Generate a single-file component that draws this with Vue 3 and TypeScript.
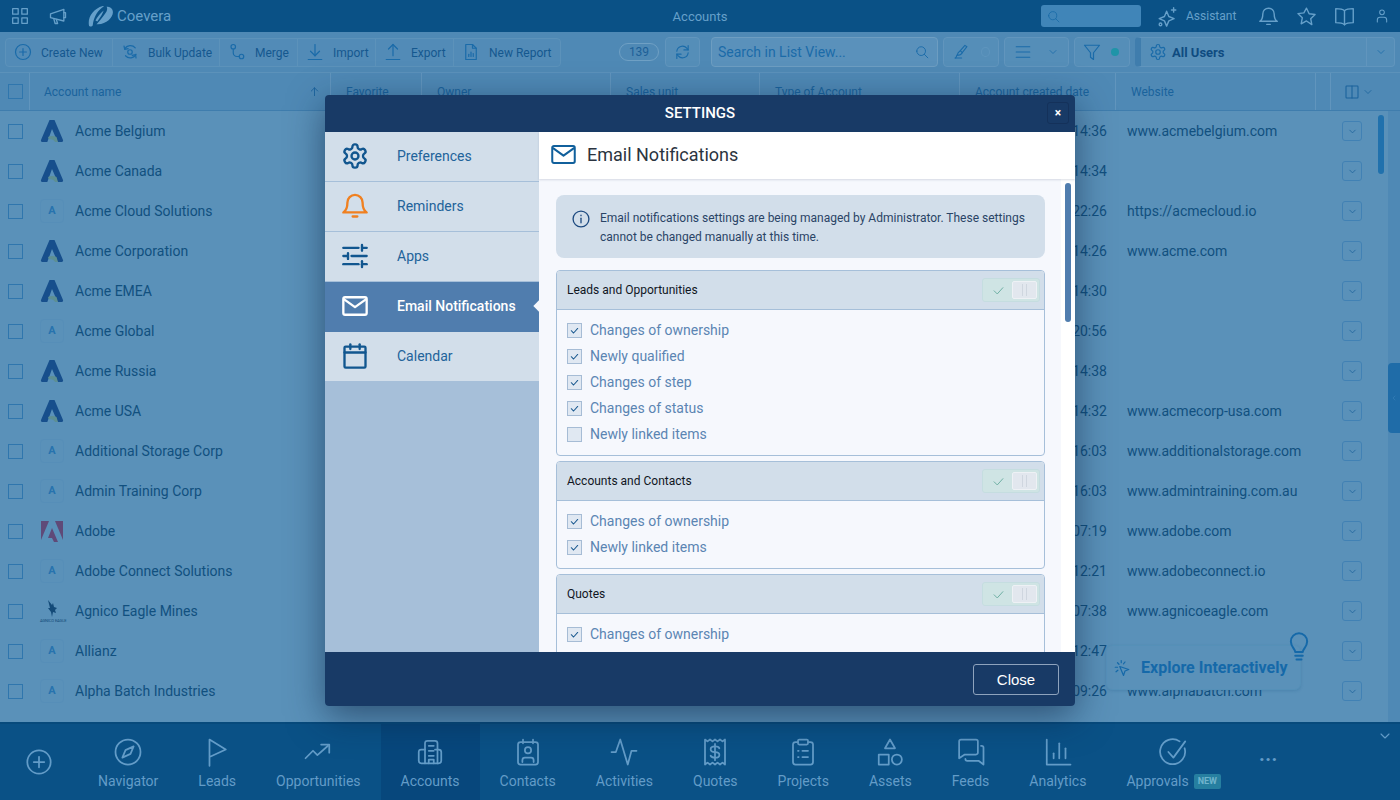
<script setup lang="ts">
import { h } from 'vue';

const circle = (cx: number, cy: number, r: number) =>
  `M${cx - r} ${cy}a${r} ${r} 0 1 0 ${r * 2} 0a${r} ${r} 0 1 0 ${-r * 2} 0z`;

const icons: Record<string, string[]> = {
  grid: ['M4 4h6v6H4z', 'M14 4h6v6h-6z', 'M4 14h6v6H4z', 'M14 14h6v6h-6z'],
  megaphone: ['M3 9.5L19 4v14L3 14z', 'M7 15.5l1.5 5.5h3l-1.5-4.8', 'M19 8h2v6h-2'],
  plusCircle: [circle(12, 12, 10), 'M12 7.5v9', 'M7.5 12h9'],
  bulk: ['M5 8a8.5 8.5 0 0 1 14-1.5', 'M4 4l1 4.5 4.5-1', 'M20 15a8.5 8.5 0 0 1-14 2', 'M20 20l-.5-4.5-4.5 1', circle(12, 12, 3)],
  merge: [circle(7, 5, 3), 'M7 8v5a5 5 0 0 0 5 5h3', circle(18, 18, 3)],
  download: ['M12 2v15', 'M6 11l6 6 6-6', 'M3 22h18'],
  upload: ['M12 17V2', 'M6 8l6-6 6 6', 'M3 22h18'],
  report: ['M5 2h9l5 5v15H5z', 'M14 2v5h5', 'M9 18v-3', 'M12 18v-6', 'M15 18v-4'],
  refresh: ['M4 11a8 8 0 0 1 14-4.5L20 9', 'M20 3v6h-6', 'M20 13a8 8 0 0 1-14 4.5L4 15', 'M4 21v-6h6'],
  search: [circle(10.5, 10.5, 7.5), 'M16 16l6 6'],
  brush: ['M3 21h10', 'M6 17l-2 4', 'M6 17c1-4 3-6 5-7l3 3c-1 2-4 4-8 4z', 'M11 10l7-8 3 2-7 9'],
  menu: ['M3 5h18', 'M3 12h18', 'M3 19h18'],
  filter: ['M2 3h20l-8 10v9l-4-3v-6z'],
  gear: [
    'M12.22 2h-.44a2 2 0 0 0-2 2v.18a2 2 0 0 1-1 1.73l-.43.25a2 2 0 0 1-2 0l-.15-.08a2 2 0 0 0-2.73.73l-.22.38a2 2 0 0 0 .73 2.73l.15.1a2 2 0 0 1 1 1.72v.51a2 2 0 0 1-1 1.74l-.15.09a2 2 0 0 0-.73 2.73l.22.38a2 2 0 0 0 2.73.73l.15-.08a2 2 0 0 1 2 0l.43.25a2 2 0 0 1 1 1.73V20a2 2 0 0 0 2 2h.44a2 2 0 0 0 2-2v-.18a2 2 0 0 1 1-1.73l.43-.25a2 2 0 0 1 2 0l.15.08a2 2 0 0 0 2.73-.73l.22-.39a2 2 0 0 0-.73-2.73l-.15-.08a2 2 0 0 1-1-1.74v-.5a2 2 0 0 1 1-1.74l.15-.09a2 2 0 0 0 .73-2.73l-.22-.38a2 2 0 0 0-2.73-.73l-.15.08a2 2 0 0 1-2 0l-.43-.25a2 2 0 0 1-1-1.73V4a2 2 0 0 0-2-2z',
    circle(12, 12, 3),
  ],
  bell: ['M5.5 9a6.5 6.5 0 0 1 13 0c0 5 1 7 3.5 8.5H2C4.5 16 5.5 14 5.5 9z', 'M10 21h4'],
  sliders: ['M2 5h13', 'M18 5h4', 'M18 2.5v5', 'M2 12h4', 'M9 12h13', 'M6 9.5v5', 'M2 19h13', 'M18 19h4', 'M18 16.5v5'],
  mail: ['M3.5 4.5h17A1.5 1.5 0 0 1 22 6v12a1.5 1.5 0 0 1-1.5 1.5h-17A1.5 1.5 0 0 1 2 18V6a1.5 1.5 0 0 1 1.5-1.5z', 'M3 6.5l9 6.5 9-6.5'],
  calendar: ['M4 4h16a1 1 0 0 1 1 1v16a1 1 0 0 1-1 1H4a1 1 0 0 1-1-1V5a1 1 0 0 1 1-1z', 'M3 9h18', 'M8 2v4', 'M16 2v4'],
  info: [circle(12, 12, 9.5), 'M12 11v5.5', 'M12 7.5v.5'],
  check: ['M5 12.5l5 5 9-10'],
  chevron: ['M6 9l6 6 6-6'],
  chevronLeft: ['M15 6l-6 6 6 6'],
  arrowUp: ['M12 21V4', 'M5 11l7-7 7 7'],
  columns: ['M4 3h16a1 1 0 0 1 1 1v16a1 1 0 0 1-1 1H4a1 1 0 0 1-1-1V4a1 1 0 0 1 1-1z', 'M12 3v18'],
  sparkle: ['M11 6l2.5 6 6 2.5-6 2.5L11 23l-2.5-6-6-2.5 6-2.5z', 'M19 2v5', 'M16.5 4.5h5', circle(4, 21, 1.5)],
  star: ['M12 2.5l3 6.3 6.8.9-5 4.8 1.3 6.8L12 17.1l-6.100 3.200 1.300-6.800-5-4.800 6.800-.9z'],
  book: ['M12 5.5C10 3.5 6 3 2 3v16c4 0 8 .5 10 2.5 2-2 6-2.5 10-2.5V3c-4 0-8 .5-10 2.5z', 'M12 5.5v16'],
  user: [circle(12, 6.5, 3.5), 'M5 21v-3a4 4 0 0 1 4-4h6a4 4 0 0 1 4 4v3'],
  compass: [circle(12, 12, 10), 'M16.5 7.5l-2.500 6-6.500 3 2.500-6z'],
  flag: ['M6 23V2l13 8-13 6'],
  trend: ['M2 17l6-6 3.5 3.5L20 7', 'M14.5 6H21v6.5'],
  building: ['M8 21V5a2 2 0 0 1 2-2h6a2 2 0 0 1 2 2v16', 'M8 10H5a2 2 0 0 0-2 2v7a2 2 0 0 0 2 2h14a2 2 0 0 0 2-2v-7a2 2 0 0 0-2-2h-3', 'M11 7h4', 'M11 11h4', 'M11 15h4', 'M11 21v-3h4v3'],
  contacts: ['M6 4h12a2 2 0 0 1 2 2v14a2 2 0 0 1-2 2H6a2 2 0 0 1-2-2V6a2 2 0 0 1 2-2z', 'M8 2v3', 'M16 2v3', circle(12, 10.5, 2.5), 'M7.5 20v-1.5a2 2 0 0 1 2-2h5a2 2 0 0 1 2 2V20'],
  activity: ['M2 12h3.5L9 2l6 20 3-11h4'],
  quotes: ['M4 2l2 1.5L8 2l2 1.5L12 2l2 1.5L16 2l2 1.5L20 2v20l-2-1.5-2 1.5-2-1.5-2 1.5-2-1.5L8 22l-2-1.5L4 22z', 'M15.5 9c-.5-1-1.5-1.5-3.5-1.5-2.5 0-3.5 1-3.5 2.3S9.5 12 12 12s3.5 1 3.5 2.3-1 2.2-3.5 2.2c-2 0-3-.5-3.5-1.5', 'M12 5.5v13'],
  projects: ['M8 4H6a2 2 0 0 0-2 2v14a2 2 0 0 0 2 2h12a2 2 0 0 0 2-2V6a2 2 0 0 0-2-2h-2', 'M9 2h6a1 1 0 0 1 1 1v2a1 1 0 0 1-1 1H9a1 1 0 0 1-1-1V3a1 1 0 0 1 1-1z', 'M8 11h.5', 'M11.5 11H16', 'M8 16h.5', 'M11.5 16H16'],
  assets: ['M12 2l4 7H8z', 'M3 14h8v8H3z', circle(17.5, 18, 4)],
  feeds: ['M4 2h12a1.5 1.5 0 0 1 1.5 1.5v9A1.5 1.5 0 0 1 16 14H7l-4.5 3V3.5A1.5 1.5 0 0 1 4 2z', 'M20 7h.5A1.5 1.5 0 0 1 22 8.5V22l-4-3H9a1.5 1.5 0 0 1-1.5-1.5'],
  analytics: ['M3 2v20h19', 'M8.5 17v-4', 'M13 17V5', 'M18 17V9'],
  approvals: ['M20.5 9a10 10 0 1 1-4-5.5', 'M7.5 12l4 4.5L21 3.5'],
  cursor: ['M9 10l12 4-5 2-2 6z', 'M6 5l2 2', 'M3 11h3', 'M11 2v3', 'M4 17l2.5-2', 'M16 4l-2 2.5'],
  bulb: ['M9 16c0-2.5-3.5-4-3.5-8.5a6.5 6.5 0 0 1 13 0c0 4.500-3.500 6-3.500 8.500z', 'M9 19h6', 'M10 22h4'],
};

const Icon = (props: { name: string }) =>
  h(
    'svg',
    { viewBox: '0 0 24 24', fill: 'none', stroke: 'currentColor', 'stroke-linecap': 'round', 'stroke-linejoin': 'round' },
    icons[props.name].map((d) => h('path', { d })),
  );
Icon.props = ['name'];

const actions = [
  { label: 'Create New', icon: 'plusCircle' },
  { label: 'Bulk Update', icon: 'bulk' },
  { label: 'Merge', icon: 'merge' },
  { label: 'Import', icon: 'download' },
  { label: 'Export', icon: 'upload' },
  { label: 'New Report', icon: 'report' },
];

const columns = ['Favorite', 'Owner', 'Sales unit', 'Type of Account', 'Account created date', 'Website'];

const accounts = [
  { name: 'Acme Belgium', logo: 'acme', time: '14:36', web: 'www.acmebelgium.com' },
  { name: 'Acme Canada', logo: 'acme', time: '14:34', web: '' },
  { name: 'Acme Cloud Solutions', logo: 'text', time: '22:26', web: 'https://acmecloud.io' },
  { name: 'Acme Corporation', logo: 'acme', time: '14:26', web: 'www.acme.com' },
  { name: 'Acme EMEA', logo: 'acme', time: '14:30', web: '' },
  { name: 'Acme Global', logo: 'text', time: '20:56', web: '' },
  { name: 'Acme Russia', logo: 'acme', time: '14:38', web: '' },
  { name: 'Acme USA', logo: 'acme', time: '14:32', web: 'www.acmecorp-usa.com' },
  { name: 'Additional Storage Corp', logo: 'text', time: '16:03', web: 'www.additionalstorage.com' },
  { name: 'Admin Training Corp', logo: 'text', time: '16:03', web: 'www.admintraining.com.au' },
  { name: 'Adobe', logo: 'adobe', time: '07:19', web: 'www.adobe.com' },
  { name: 'Adobe Connect Solutions', logo: 'text', time: '12:21', web: 'www.adobeconnect.io' },
  { name: 'Agnico Eagle Mines', logo: 'agnico', time: '07:38', web: 'www.agnicoeagle.com' },
  { name: 'Allianz', logo: 'text', time: '12:47', web: 'www.allianz.com' },
  { name: 'Alpha Batch Industries', logo: 'text', time: '09:26', web: 'www.alphabatch.com' },
];

const navItems = [
  { label: 'Navigator', icon: 'compass' },
  { label: 'Leads', icon: 'flag' },
  { label: 'Opportunities', icon: 'trend' },
  { label: 'Accounts', icon: 'building', active: true },
  { label: 'Contacts', icon: 'contacts' },
  { label: 'Activities', icon: 'activity' },
  { label: 'Quotes', icon: 'quotes' },
  { label: 'Projects', icon: 'projects' },
  { label: 'Assets', icon: 'assets' },
  { label: 'Feeds', icon: 'feeds' },
  { label: 'Analytics', icon: 'analytics' },
  { label: 'Approvals', icon: 'approvals', badge: 'NEW' },
];

const menu = [
  { label: 'Preferences', icon: 'gear' },
  { label: 'Reminders', icon: 'bell', orange: true },
  { label: 'Apps', icon: 'sliders' },
  { label: 'Email Notifications', icon: 'mail', active: true },
  { label: 'Calendar', icon: 'calendar' },
];

const sections = [
  {
    title: 'Leads and Opportunities',
    items: [
      { label: 'Changes of ownership', on: true },
      { label: 'Newly qualified', on: true },
      { label: 'Changes of step', on: true },
      { label: 'Changes of status', on: true },
      { label: 'Newly linked items', on: false },
    ],
  },
  {
    title: 'Accounts and Contacts',
    items: [
      { label: 'Changes of ownership', on: true },
      { label: 'Newly linked items', on: true },
    ],
  },
  {
    title: 'Quotes',
    items: [{ label: 'Changes of ownership', on: true }],
  },
];
</script>

<template>
  <div class="app">
    <header class="topbar">
      <Icon name="grid" class="top-ic first" />
      <Icon name="megaphone" class="top-ic mega" />
      <svg class="brand" viewBox="0 0 28 24">
        <path d="M1 23C-1 14 5 4 16 1c2 0 .5 1-1 2C9 8 6 14 5 22c0 1-3 2-4 1z" />
        <path d="M9 21c3-3 8-9 11-14 1-2 1-4 0-5 4 0 7 2 7 6 0 6-8 14-18 13z" />
        <path d="M8 17c2-4 5-8 9-11-1 3-4 8-7 12z" />
      </svg>
      <span class="brand-name">Coevera</span>
      <span class="top-title">Accounts</span>
      <div class="top-search"><Icon name="search" /></div>
      <Icon name="sparkle" class="top-ic spark" />
      <span class="assistant">Assistant</span>
      <Icon name="bell" class="top-ic right bell" />
      <Icon name="star" class="top-ic right" />
      <Icon name="book" class="top-ic right" />
      <Icon name="user" class="top-ic last" />
    </header>

    <div class="toolbar">
      <div class="actions">
        <button v-for="a in actions" :key="a.label" class="action">
          <Icon :name="a.icon" />
          <span>{{ a.label }}</span>
        </button>
      </div>
      <span class="count">139</span>
      <button class="tool refresh"><Icon name="refresh" /></button>
      <div class="list-search">
        <span>Search in List View...</span>
        <Icon name="search" />
      </div>
      <button class="tool brush"><Icon name="brush" /><i class="dot off"></i></button>
      <button class="tool lines"><Icon name="menu" /><Icon name="chevron" class="tiny" /></button>
      <button class="tool funnel"><Icon name="filter" /><i class="dot"></i></button>
      <div class="users">
        <Icon name="gear" />
        <b>All Users</b>
        <span class="users-caret"><Icon name="chevron" /></span>
      </div>
    </div>

    <div class="grid-head cols">
      <div class="head-check"><i class="box"></i></div>
      <div class="head-name">Account name<Icon name="arrowUp" class="sort" /></div>
      <div v-for="c in columns" :key="c" class="head-cell">{{ c }}</div>
      <div class="head-spacer"></div>
      <div class="head-cols"><Icon name="columns" /><Icon name="chevron" /></div>
    </div>

    <main class="list">
      <div v-for="a in accounts" :key="a.name" class="row cols">
        <div class="cell-check"><i class="box"></i></div>
        <div class="cell-name">
          <svg v-if="a.logo === 'acme'" class="logo" viewBox="0 0 24 24">
            <path class="acme-a" d="M9.500 1h5l8.500 20c.4 1-.3 2-1.300 2h-4L12 10 7.300 23h-5c-1 0-1.700-1-1.300-2z" />
            <path class="acme-b" d="M8 18c3-1.500 6-1.200 8.500 0l1.500 5h-3c-1-2-3-3-6-2.500z" />
          </svg>
          <svg v-else-if="a.logo === 'adobe'" class="logo" viewBox="0 0 24 24">
            <path class="adobe" d="M1 2h8L1 21z" />
            <path class="adobe" d="M15 2h8v19z" />
            <path class="adobe" d="M12 9l6 14h-4l-2-4h-4z" />
          </svg>
          <div v-else-if="a.logo === 'agnico'" class="agnico">
            <svg viewBox="0 0 14 18"><path d="M3 0l4 5 1-2 1 4 3 1-2 2 1 3-3-1-1 5-1-5-3-4 2 0z" /></svg>
            <small>AGNICO EAGLE</small>
          </div>
          <span v-else class="letter">A</span>
          <span class="name">{{ a.name }}</span>
        </div>
        <div class="cell-time">{{ a.time }}</div>
        <div class="cell-web">{{ a.web }}</div>
        <div class="cell-more"><button class="more"><Icon name="chevron" /></button></div>
      </div>
      <div class="row cols">
        <div class="cell-check"><i class="box"></i></div>
      </div>
    </main>

    <nav class="bottom">
      <Icon name="plusCircle" class="nav-plus" />
      <a v-for="n in navItems" :key="n.label" class="nav-item" :class="{ active: n.active }">
        <Icon :name="n.icon" />
        <span class="nav-label">{{ n.label }}<em v-if="n.badge">{{ n.badge }}</em></span>
      </a>
      <span class="nav-dots">...</span>
      <Icon name="chevron" class="nav-collapse" />
    </nav>

    <div class="side-tab"><Icon name="chevronLeft" /></div>
    <div class="list-thumb"></div>

    <div class="explore">
      <Icon name="cursor" />
      <span>Explore Interactively</span>
      <Icon name="bulb" class="explore-bulb" />
    </div>

    <section class="modal">
      <header class="modal-head">
        <h2>SETTINGS</h2>
        <button class="modal-x">×</button>
      </header>
      <div class="modal-body">
        <aside class="menu">
          <a v-for="m in menu" :key="m.label" class="menu-item" :class="{ active: m.active, orange: m.orange }">
            <Icon :name="m.icon" />
            <span>{{ m.label }}</span>
          </a>
        </aside>
        <div class="pane">
          <div class="pane-title">
            <Icon name="mail" />
            <h3>Email Notifications</h3>
          </div>
          <div class="pane-main">
            <div class="pane-scroll">
              <div class="notice">
                <Icon name="info" />
                <p>Email notifications settings are being managed by Administrator. These settings cannot be changed manually at this time.</p>
              </div>
              <div v-for="s in sections" :key="s.title" class="section">
                <div class="section-head">
                  <span>{{ s.title }}</span>
                  <div class="switch">
                    <span class="switch-on"><Icon name="check" /></span>
                    <span class="switch-knob"><i></i></span>
                  </div>
                </div>
                <div class="section-items">
                  <label v-for="it in s.items" :key="it.label" class="opt">
                    <span class="opt-box"><Icon v-if="it.on" name="check" /></span>
                    {{ it.label }}
                  </label>
                </div>
              </div>
            </div>
            <div class="pane-track"><div class="pane-thumb"></div></div>
          </div>
        </div>
      </div>
      <footer class="modal-foot">
        <button class="close">Close</button>
      </footer>
    </section>
  </div>
</template>

<style scoped>
.app {
  position: relative;
  display: flex;
  flex-direction: column;
  width: 1400px;
  height: 800px;
  overflow: hidden;
  font-family: Roboto, 'Liberation Sans', sans-serif;
  background: #5a91b9;
  color: #13538a;
}

svg {
  display: block;
  fill: none;
  stroke-width: 1.6;
}

button {
  font-family: inherit;
  cursor: pointer;
}

/* top bar */
.topbar {
  display: flex;
  align-items: center;
  flex: none;
  height: 32px;
  background: #0a5186;
  color: #66a0ca;
  position: relative;
}

.top-ic {
  width: 20px;
  height: 20px;
  flex: none;
}

.first {
  width: 22px;
  height: 22px;
  margin-left: 9px;
  stroke-width: 1.4;
}

.mega {
  margin-left: 17px;
}

.brand {
  width: 26px;
  height: 22px;
  margin-left: 20px;
  fill: #66a0ca;
  stroke: none;
}

.brand-name {
  margin-left: 3px;
  font-size: 15px;
}

.top-title {
  position: absolute;
  left: 0;
  right: 0;
  text-align: center;
  font-size: 13px;
  pointer-events: none;
}

.top-search {
  margin-left: auto;
  width: 100px;
  height: 22px;
  margin-top: -1px;
  background: #4085b8;
  border-radius: 3px;
  padding: 5px 6px;
  box-sizing: border-box;
  color: #1a6ca8;
}

.top-search svg {
  width: 13px;
  height: 13px;
}

.spark {
  width: 21px;
  height: 21px;
  margin-left: 16px;
}

.assistant {
  margin-left: 8px;
  width: 50px;
  font-size: 12px;
}

.right {
  width: 21px;
  height: 21px;
  margin-left: 17px;
}

.bell {
  margin-left: 22px;
}

.last {
  width: 16px;
  height: 18px;
  margin: 0 10px 0 19px;
}

/* toolbar */
.toolbar {
  display: flex;
  align-items: center;
  flex: none;
  height: 41px;
  padding: 0 5px;
  box-sizing: border-box;
  background: #4f89b5;
  border-bottom: 1px solid #5c92ba;
}

.actions {
  display: grid;
  grid-template-columns: 107px 107px 78px 78px 78px 106px;
  height: 29px;
  width: 556px;
  border: 1px solid #5c92ba;
  border-radius: 4px;
  box-sizing: border-box;
  background: #528bb7;
}

.action {
  display: flex;
  align-items: center;
  gap: 9px;
  padding: 0 0 0 8px;
  border: none;
  border-right: 1px solid #5c92ba;
  background: none;
  color: #15588f;
  font-size: 12px;
  white-space: nowrap;
}

.action:last-child {
  border-right: none;
}

.action span {
  margin-top: 2px;
}

.action svg {
  width: 18px;
  height: 18px;
  color: #1a6ba9;
  flex: none;
}

.count {
  width: 38px;
  height: 16px;
  margin-left: 58px;
  border: 1px solid #6fa0c4;
  border-radius: 9px;
  font-size: 12px;
  line-height: 16px;
  text-align: center;
  color: #1d6098;
}

.tool {
  display: flex;
  align-items: center;
  height: 30px;
  padding: 0 8px;
  box-sizing: border-box;
  border: 1px solid #6195bd;
  border-radius: 4px;
  background: #558eb8;
  color: #1a6ba9;
}

.tool svg {
  width: 18px;
  height: 18px;
}

.refresh {
  width: 35px;
  margin-left: 6px;
}

.list-search {
  display: flex;
  align-items: center;
  justify-content: space-between;
  width: 227px;
  height: 30px;
  margin-left: 11px;
  padding: 0 8px 0 6px;
  box-sizing: border-box;
  border: 1px solid #6d9dc1;
  border-radius: 4px;
  background: #5a91bb;
  color: #1a6ba9;
  font-size: 14px;
}

.list-search svg {
  width: 14px;
  height: 14px;
}

.brush {
  width: 56px;
  margin-left: 5px;
  gap: 12px;
  padding-left: 9px;
}

.lines {
  width: 65px;
  margin-left: 5px;
  gap: 15px;
  padding-left: 9px;
}

.lines .tiny {
  width: 12px;
  height: 12px;
}

.funnel {
  width: 56px;
  margin-left: 5px;
  gap: 10px;
  padding-left: 8px;
}

.dot {
  width: 8px;
  height: 8px;
  border-radius: 50%;
  background: #1f94a8;
}

.dot.off {
  background: #558eb8;
  border: 1px solid #5f95be;
}

.users {
  display: flex;
  align-items: center;
  width: 260px;
  height: 30px;
  margin-left: 5px;
  padding-left: 13px;
  box-sizing: border-box;
  border: 1px solid #6195bd;
  border-left: 6px solid #3f7dad;
  border-radius: 4px;
  background: #558eb8;
  color: #0f4b80;
  font-size: 13px;
}

.users svg {
  width: 18px;
  height: 18px;
  margin-right: 5px;
  margin-left: -5px;
  color: #1a6ba9;
}

.users b {
  font-weight: 700;
}

.users-caret {
  display: flex;
  align-items: center;
  justify-content: center;
  align-self: stretch;
  width: 27px;
  margin-left: auto;
  border-left: 1px solid #6195bd;
}

.users-caret svg {
  width: 12px;
  height: 12px;
  margin: 0;
}

/* list */
.cols {
  display: grid;
  grid-template-columns: 30px 301px 91px 189px 149px 200px 156px 200px 15px 47px 22px;
}

.grid-head {
  flex: none;
  height: 38px;
  align-items: stretch;
  background: #4f89b5;
  border-bottom: 1px solid #3f7dad;
  box-sizing: border-box;
  font-size: 12px;
  color: #1a639c;
}

.grid-head > div {
  display: flex;
  align-items: center;
  border-right: 1px solid #6195bd;
}

.head-check {
  padding-left: 8px;
}

.head-name {
  position: relative;
  padding-left: 14px;
}

.sort {
  position: absolute;
  right: 10px;
  width: 11px;
  height: 11px;
  stroke-width: 2;
}

.head-cell {
  padding-left: 15px;
}

.head-cols {
  gap: 2px;
  padding-left: 13px;
  grid-column: 10 / 12;
  border-right: none !important;
}

.head-cols svg {
  width: 16px;
  height: 16px;
}

.head-cols svg:last-child {
  width: 12px;
  height: 12px;
}

.box {
  display: block;
  width: 15px;
  height: 15px;
  box-sizing: border-box;
  border: 1px solid #2f76ad;
  background: transparent;
}

.list {
  flex: 1;
  min-height: 0;
  overflow: hidden;
  background: #5a91b9;
}

.row {
  height: 40px;
  align-items: center;
  font-size: 14px;
  color: #11507f;
}

.cell-check {
  padding-left: 8px;
}

.cell-name {
  display: flex;
  align-items: center;
  grid-column: 2 / 7;
  padding-left: 10px;
}

.name {
  margin-left: 11px;
}

.logo {
  width: 24px;
  height: 24px;
  flex: none;
  stroke: none;
}

.acme-a {
  fill: #174f8c;
}

.acme-b {
  fill: #5d8f93;
}

.adobe {
  fill: #5f4a78;
}

.letter {
  display: block;
  flex: none;
  width: 24px;
  height: 24px;
  box-sizing: border-box;
  border: 1px solid #568eb8;
  border-radius: 4px;
  font-size: 11px;
  font-weight: 700;
  line-height: 22px;
  text-align: center;
  color: #2773ae;
}

.agnico {
  flex: none;
  width: 24px;
  text-align: center;
  line-height: 1;
  color: #134a78;
}

.agnico svg {
  width: 14px;
  height: 18px;
  margin: 0 auto 1px;
  fill: #134a78;
  stroke: none;
}

.agnico small {
  display: block;
  font-size: 4px;
  letter-spacing: -0.1px;
  white-space: nowrap;
}

.cell-time {
  grid-column: 7;
  padding-right: 9px;
  text-align: right;
}

.cell-web {
  grid-column: 8 / 10;
  padding-left: 11px;
  white-space: nowrap;
}

.cell-more {
  grid-column: 10;
  padding-left: 11px;
}

.more {
  display: flex;
  align-items: center;
  justify-content: center;
  width: 20px;
  height: 20px;
  padding: 0;
  background: transparent;
  border: 1px solid #4181b4;
  border-radius: 3px;
  color: #175f99;
}

.more svg {
  width: 11px;
  height: 11px;
}

.list-thumb {
  position: absolute;
  left: 1378px;
  top: 115px;
  width: 6px;
  height: 59px;
  border-radius: 3px;
  background: #2071ad;
}

.side-tab {
  position: absolute;
  right: 0;
  top: 111px;
  width: 12px;
  height: 611px;
  background: #4f89b5;
}

.side-tab svg {
  position: absolute;
  top: 252px;
  left: 0;
  width: 12px;
  height: 70px;
  background: #1f6ca8;
  border-radius: 4px 0 0 4px;
  color: #3f85bb;
  padding: 29px 2px;
  box-sizing: border-box;
}

/* bottom nav */
.bottom {
  display: flex;
  align-items: stretch;
  flex: none;
  position: relative;
  height: 78px;
  background: #0a5186;
  border-top: 2px solid #074a7c;
  box-sizing: border-box;
  color: #639cc8;
}

.nav-plus {
  flex: none;
  align-self: center;
  width: 28px;
  height: 28px;
  margin: 0 25px;
  stroke-width: 1.5;
}

.nav-item {
  display: flex;
  flex-direction: column;
  align-items: center;
  padding: 0 20px;
  flex: none;
}

.nav-item svg {
  width: 30px;
  height: 30px;
  margin-top: 13px;
  stroke-width: 1.4;
}

.nav-item.active {
  background: #07477c;
}

.nav-label {
  display: flex;
  align-items: center;
  height: 18px;
  margin-top: 5px;
  font-size: 14px;
}

.nav-label em {
  margin-left: 5px;
  padding: 0 4px;
  height: 15px;
  border-radius: 2px;
  background: #267fa0;
  color: #6fb3cc;
  font-size: 9px;
  font-style: normal;
  font-weight: 700;
  line-height: 15px;
}

.nav-dots {
  margin-left: 18px;
  margin-top: 18px;
  font-size: 20px;
  font-weight: 700;
  letter-spacing: 0.5px;
}

.nav-collapse {
  position: absolute;
  right: 7px;
  top: 4px;
  width: 16px;
  height: 16px;
}

/* explore */
.explore {
  position: absolute;
  left: 1106px;
  top: 645px;
  display: flex;
  align-items: center;
  gap: 10px;
  width: 195px;
  height: 45px;
  padding-left: 6px;
  box-sizing: border-box;
  background: #5a91b9;
  border: 1px solid #5590b8;
  border-radius: 6px;
  box-shadow: 0 1px 3px rgba(20, 80, 130, 0.2);
  color: #1569a9;
  font-size: 16px;
  font-weight: 700;
}

.explore > svg {
  width: 18px;
  height: 18px;
  flex: none;
}

.explore .explore-bulb {
  position: absolute;
  right: -14px;
  top: -14px;
  width: 30px;
  height: 30px;
}

/* modal */
.modal {
  position: absolute;
  left: 325px;
  top: 95px;
  display: flex;
  flex-direction: column;
  width: 750px;
  height: 611px;
  border-radius: 4px;
  overflow: hidden;
  box-shadow: 0 10px 36px rgba(8, 30, 60, 0.55);
}

.modal-head {
  position: relative;
  flex: none;
  height: 37px;
  background: #183a66;
}

.modal-head h2 {
  margin: 0;
  font-size: 15px;
  font-weight: 500;
  line-height: 36px;
  text-align: center;
  color: #fff;
}

.modal-x {
  position: absolute;
  right: 6px;
  top: 7px;
  width: 22px;
  height: 22px;
  padding: 0;
  border: 1px solid #14315a;
  border-radius: 3px;
  background: #183a66;
  color: #fff;
  font-size: 12px;
  font-weight: 700;
  line-height: 20px;
}

.modal-body {
  display: flex;
  flex: 1;
  min-height: 0;
}

.menu {
  flex: none;
  width: 214px;
  background: #a6bfd9;
}

.menu-item {
  position: relative;
  display: flex;
  align-items: center;
  height: 50px;
  box-sizing: border-box;
  padding: 0 0 2px 16px;
  border-bottom: 1px solid #a6bfd9;
  background: #d2deea;
  color: #22639a;
  font-size: 14px;
}

.menu-item svg {
  width: 28px;
  height: 28px;
  flex: none;
  margin-right: 28px;
  color: #11568f;
  stroke-width: 2;
}

.menu-item.orange svg {
  color: #f08020;
}

.menu-item.active {
  background: #507dae;
  border-bottom-color: #507dae;
  color: #fff;
  font-weight: 500;
}

.menu-item.active svg {
  color: #fff;
}

.menu-item.active::after {
  content: '';
  position: absolute;
  right: -4px;
  top: 20px;
  width: 8px;
  height: 8px;
  background: #f6f8fd;
  transform: rotate(45deg);
}

.pane {
  display: flex;
  flex-direction: column;
  flex: 1;
  min-width: 0;
  background: #fff;
}

.pane-title {
  display: flex;
  align-items: center;
  flex: none;
  position: relative;
  height: 47px;
  box-sizing: border-box;
  padding: 0 0 2px 11px;
  background: #fff;
  box-shadow: 0 1px 2px rgba(60, 80, 110, 0.18);
}

.pane-title svg {
  width: 27px;
  height: 27px;
  color: #11609c;
  stroke-width: 1.8;
}

.pane-title h3 {
  margin: 0 0 0 10px;
  font-size: 18px;
  font-weight: 400;
  color: #2b3440;
}

.pane-main {
  display: flex;
  flex: 1;
  min-height: 0;
}

.pane-scroll {
  flex: 1;
  min-width: 0;
  padding: 16px 16px 0 17px;
  background: #f6f8fd;
  overflow: hidden;
}

.pane-track {
  flex: none;
  width: 14px;
  padding: 4px 4px 0;
  box-sizing: border-box;
  background: #fff;
}

.pane-thumb {
  width: 6px;
  height: 139px;
  border-radius: 3px;
  background: #507dae;
}

.notice {
  display: flex;
  align-items: flex-start;
  height: 63px;
  padding: 14px 16px 0 15px;
  border-radius: 8px;
  box-sizing: border-box;
  background: #d2deea;
  color: #2a4466;
  font-size: 12px;
  line-height: 19px;
  margin-bottom: 12px;
}

.notice svg {
  width: 20px;
  height: 20px;
  flex: none;
  margin-right: 9px;
  color: #1d4a80;
}

.notice p {
  margin: 0;
}

.section {
  margin-bottom: 5px;
  border: 1px solid #a6bfd9;
  border-radius: 4px;
  overflow: hidden;
}

.section-head {
  display: flex;
  align-items: center;
  justify-content: space-between;
  height: 38px;
  padding: 0 4px 0 10px;
  border-bottom: 1px solid #a6bfd9;
  background: #d2deea;
  color: #10161f;
  font-size: 12px;
}

.switch {
  display: flex;
  width: 58px;
  height: 24px;
  padding: 2px;
  box-sizing: border-box;
  border: 1px solid #c5dde0;
  border-radius: 3px;
  background: #cfe4e4;
}

.switch-on {
  display: flex;
  align-items: center;
  justify-content: center;
  width: 27px;
  color: #6fb0a4;
}

.switch-on svg {
  width: 15px;
  height: 15px;
}

.switch-knob {
  display: flex;
  align-items: center;
  justify-content: center;
  flex: 1;
  background: #e2e7ee;
  border: 1px solid #eef1f5;
  border-radius: 2px;
}

.switch-knob i {
  width: 3px;
  height: 12px;
  border-left: 1px solid #cfd6df;
  border-right: 1px solid #cfd6df;
}

.section-items {
  padding: 7px 10px 8px;
}

.opt {
  display: flex;
  align-items: center;
  height: 26px;
  color: #5b85b3;
  font-size: 14px;
}

.opt-box {
  display: flex;
  align-items: center;
  justify-content: center;
  flex: none;
  width: 15px;
  height: 15px;
  margin-right: 8px;
  box-sizing: border-box;
  border: 1px solid #a6bcd5;
  background: #e0e8f2;
  color: #1b5a90;
}

.opt-box svg {
  width: 11px;
  height: 11px;
  stroke-width: 2.2;
}

.modal-foot {
  display: flex;
  align-items: center;
  justify-content: flex-end;
  flex: none;
  height: 54px;
  padding-right: 16px;
  background: #183a66;
}

.close {
  width: 86px;
  height: 31px;
  padding: 0;
  background: transparent;
  border: 1px solid #8ea3bd;
  border-radius: 3px;
  color: #fff;
  font-family: 'Liberation Sans', sans-serif;
  font-size: 15px;
}
</style>
